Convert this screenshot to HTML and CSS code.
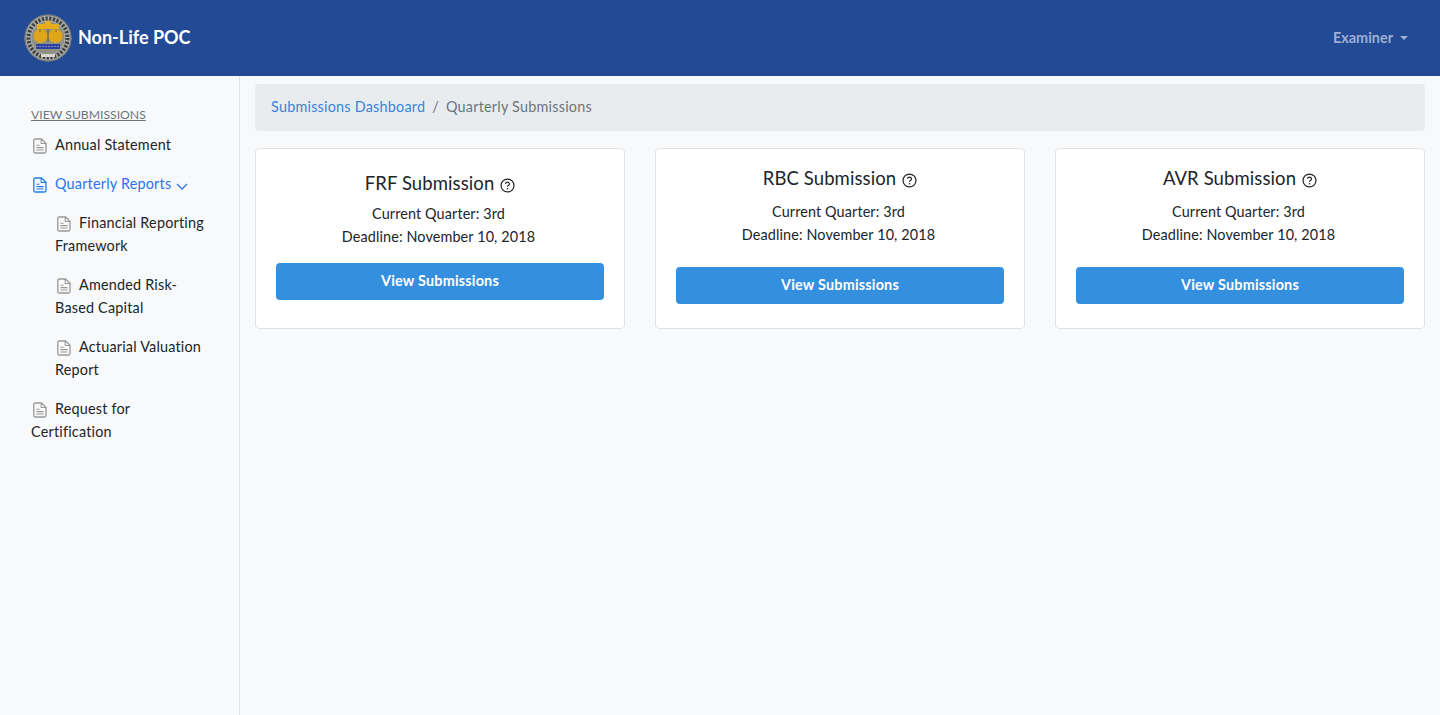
FILE: index.html
```html
<!DOCTYPE html>
<html lang="en">
<head>
<meta charset="utf-8">
<title>Non-Life POC</title>
<link rel="stylesheet" href="styles.css">
</head>
<body>
<svg class="defs" width="0" height="0" aria-hidden="true">
  <symbol id="doc" viewBox="0 0 14 16">
    <path d="M2.200 1h6.300L13 5.200v8.300c0 .9-.6 1.500-1.500 1.500H2.200c-.8 0-1.400-.6-1.400-1.500v-11C.8 1.600 1.400 1 2.200 1z" fill="none" stroke="currentColor" stroke-width="1.300"/>
    <path d="M8.200 1.200v4.300H13M3.500 7.200h3M3.500 9.600h7M3.500 12h7" fill="none" stroke="currentColor" stroke-width="1.100"/>
  </symbol>
  <symbol id="help" viewBox="0 0 16 16">
    <circle cx="8" cy="8" r="6.900" fill="none" stroke="currentColor" stroke-width="1.300"/>
    <path d="M5.900 6.300C6 5.100 6.900 4.500 8 4.500c1.200 0 2.100.7 2.100 1.800 0 1.500-2.100 1.500-2.100 3.100" fill="none" stroke="currentColor" stroke-width="1.300"/>
    <circle cx="8" cy="11.500" r=".85" fill="currentColor"/>
  </symbol>
</svg>
<header class="navbar">
  <a class="brand">
    <svg class="seal" viewBox="0 0 48 48" aria-hidden="true">
      <circle cx="24" cy="24" r="23.500" fill="#a9aba8"/>
      <circle cx="24" cy="24" r="23" fill="none" stroke="#6f7270" stroke-width="1"/>
      <circle cx="24" cy="24" r="19.500" fill="none" stroke="#3f4241" stroke-width="4" stroke-dasharray="2.200 1.500"/>
      <circle cx="24" cy="24" r="16.500" fill="#8f9184"/>
      <path d="M13 10h22v5H13z" fill="#e6ae1a"/>
      <path d="M21 7h6v4h-6z" fill="#e6ae1a"/>
      <circle cx="16.500" cy="22" r="7" fill="#dfa61a"/>
      <circle cx="31.500" cy="22" r="7" fill="#dfa61a"/>
      <path d="M16 15v3M32 15v3M24 15v13" stroke="#75601f" stroke-width="1"/>
      <path d="M12 30h24v5H12z" fill="#2f439e"/>
      <path d="M12 32.500h24" stroke="#8c96c9" stroke-width=".8" stroke-dasharray="2 1"/>
      <path d="M17 40h14v3H17z" fill="#d6d7d2"/>
    </svg>
    <span class="brand-name">Non-Life POC</span>
  </a>
  <div class="user-menu">Examiner<span class="caret"></span></div>
</header>
<div class="layout">
  <aside class="sidebar">
    <a class="side-title">VIEW SUBMISSIONS</a>
    <ul class="side-list">
      <li class="side-item"><svg class="doc"><use href="#doc"/></svg>Annual Statement</li>
      <li class="side-item is-active"><svg class="doc"><use href="#doc"/></svg>Quarterly Reports<svg class="chev" viewBox="0 0 12 7"><path d="M1 1l5 5 5-5" fill="none" stroke="currentColor" stroke-width="1.300"/></svg></li>
      <li class="side-item sub"><svg class="doc"><use href="#doc"/></svg>Financial Reporting Framework</li>
      <li class="side-item sub"><svg class="doc"><use href="#doc"/></svg>Amended Risk-Based Capital</li>
      <li class="side-item sub"><svg class="doc"><use href="#doc"/></svg>Actuarial Valuation Report</li>
      <li class="side-item"><svg class="doc"><use href="#doc"/></svg>Request for Certification</li>
    </ul>
  </aside>
  <main class="main">
    <nav class="breadcrumb"><a class="crumb-link">Submissions Dashboard</a><span class="crumb-sep">/</span><span>Quarterly Submissions</span></nav>
    <section class="cards">
      <article class="card card-first">
        <h2 class="card-title">FRF Submission<svg class="help"><use href="#help"/></svg></h2>
        <p class="card-line">Current Quarter: 3rd</p>
        <p class="card-line">Deadline: November 10, 2018</p>
        <a class="btn">View Submissions</a>
      </article>
      <article class="card">
        <h2 class="card-title">RBC Submission<svg class="help"><use href="#help"/></svg></h2>
        <p class="card-line">Current Quarter: 3rd</p>
        <p class="card-line">Deadline: November 10, 2018</p>
        <a class="btn">View Submissions</a>
      </article>
      <article class="card">
        <h2 class="card-title">AVR Submission<svg class="help"><use href="#help"/></svg></h2>
        <p class="card-line">Current Quarter: 3rd</p>
        <p class="card-line">Deadline: November 10, 2018</p>
        <a class="btn">View Submissions</a>
      </article>
    </section>
  </main>
</div>
</body>
</html>
```
FILE: styles.css
```css
* { box-sizing: border-box; }
html, body { margin: 0; height: 100%; }
body {
  background: #f8f9fb;
  color: #212529;
  font-family: "Lato", "Noto Sans", sans-serif;
  font-size: 14.400px;
  line-height: 23px;
  overflow: hidden;
}
.defs { position: absolute; }
.navbar {
  height: 76px;
  background: #224a95;
  display: flex;
  align-items: center;
  justify-content: space-between;
  padding: 0 32px 0 24px;
}
.brand { display: flex; align-items: center; gap: 6px; color: #fff; }
.seal { width: 48px; height: 48px; }
.brand-name { font-size: 18px; font-weight: 700; margin-top: -1px; }
.user-menu { color: #9fb0d2; font-size: 14.400px; font-weight: 700; display: flex; align-items: center; margin-top: -1px; }
.caret {
  margin-left: 7px;
  border-top: 4.500px solid #9fb0d2;
  border-left: 4.500px solid transparent;
  border-right: 4.500px solid transparent;
}
.layout { display: flex; height: 639px; }
.sidebar {
  width: 240px;
  flex: none;
  border-right: 1px solid #dee2e6;
  padding: 29px 32px 0 31px;
}
.side-title {
  display: block;
  color: #6c757d;
  font-size: 12.200px;
  line-height: 20px;
  text-decoration: underline;
  margin-bottom: 8px;
}
.side-list { list-style: none; margin: 0; padding: 0; }
.side-item { margin-top: 16px; color: #212529; letter-spacing: .2px; }
.side-item:first-child { margin-top: 0; padding-top: 0; }
.side-item.sub { padding-left: 24px; }
.side-item.is-active { color: #2a75ee; }
.doc { width: 14px; height: 16px; color: #999; margin: 0 8px 0 2px; vertical-align: -4px; }
.is-active .doc { color: #1f7cec; }
.chev { width: 12px; height: 7px; margin-left: 5px; vertical-align: -1px; }
.main { flex: 1; padding: 8px 15px 0; min-width: 0; }
.breadcrumb {
  height: 47px;
  background: #e9ecef;
  border-radius: 4px;
  padding: 0 16px 2px;
  display: flex;
  align-items: center;
  color: #6c757d;
  letter-spacing: .22px;
}
.crumb-link { color: #3a84d8; }
.crumb-sep { margin: 0 7px; }
.cards {
  display: grid;
  grid-template-columns: repeat(3, 370px);
  justify-content: space-between;
  margin-top: 17px;
}
.card {
  height: 181px;
  background: #fff;
  border: 1px solid #dfe1e4;
  border-radius: 4px;
  padding: 16px 20px 0;
  text-align: center;
}
.card-title {
  margin: 0 0 9px;
  font-size: 18.500px;
  font-weight: 400;
  line-height: 26px;
  color: #212529;
  letter-spacing: .1px;
}
.card-first { padding-top: 21px; }
.card-first .card-title { margin-bottom: 6px; }
.help { width: 15px; height: 15px; margin-left: 6px; vertical-align: -3px; }
.card-line { margin: 0; padding-right: 3px; color: #212529; letter-spacing: .12px; }
.btn {
  display: block;
  margin-top: 21px;
  height: 37px;
  line-height: 35px;
  background: #358fdf;
  border-radius: 4px;
  color: #fff;
  font-weight: 700;
  letter-spacing: .2px;
}
.card-first .btn { margin-top: 15px; }
```
